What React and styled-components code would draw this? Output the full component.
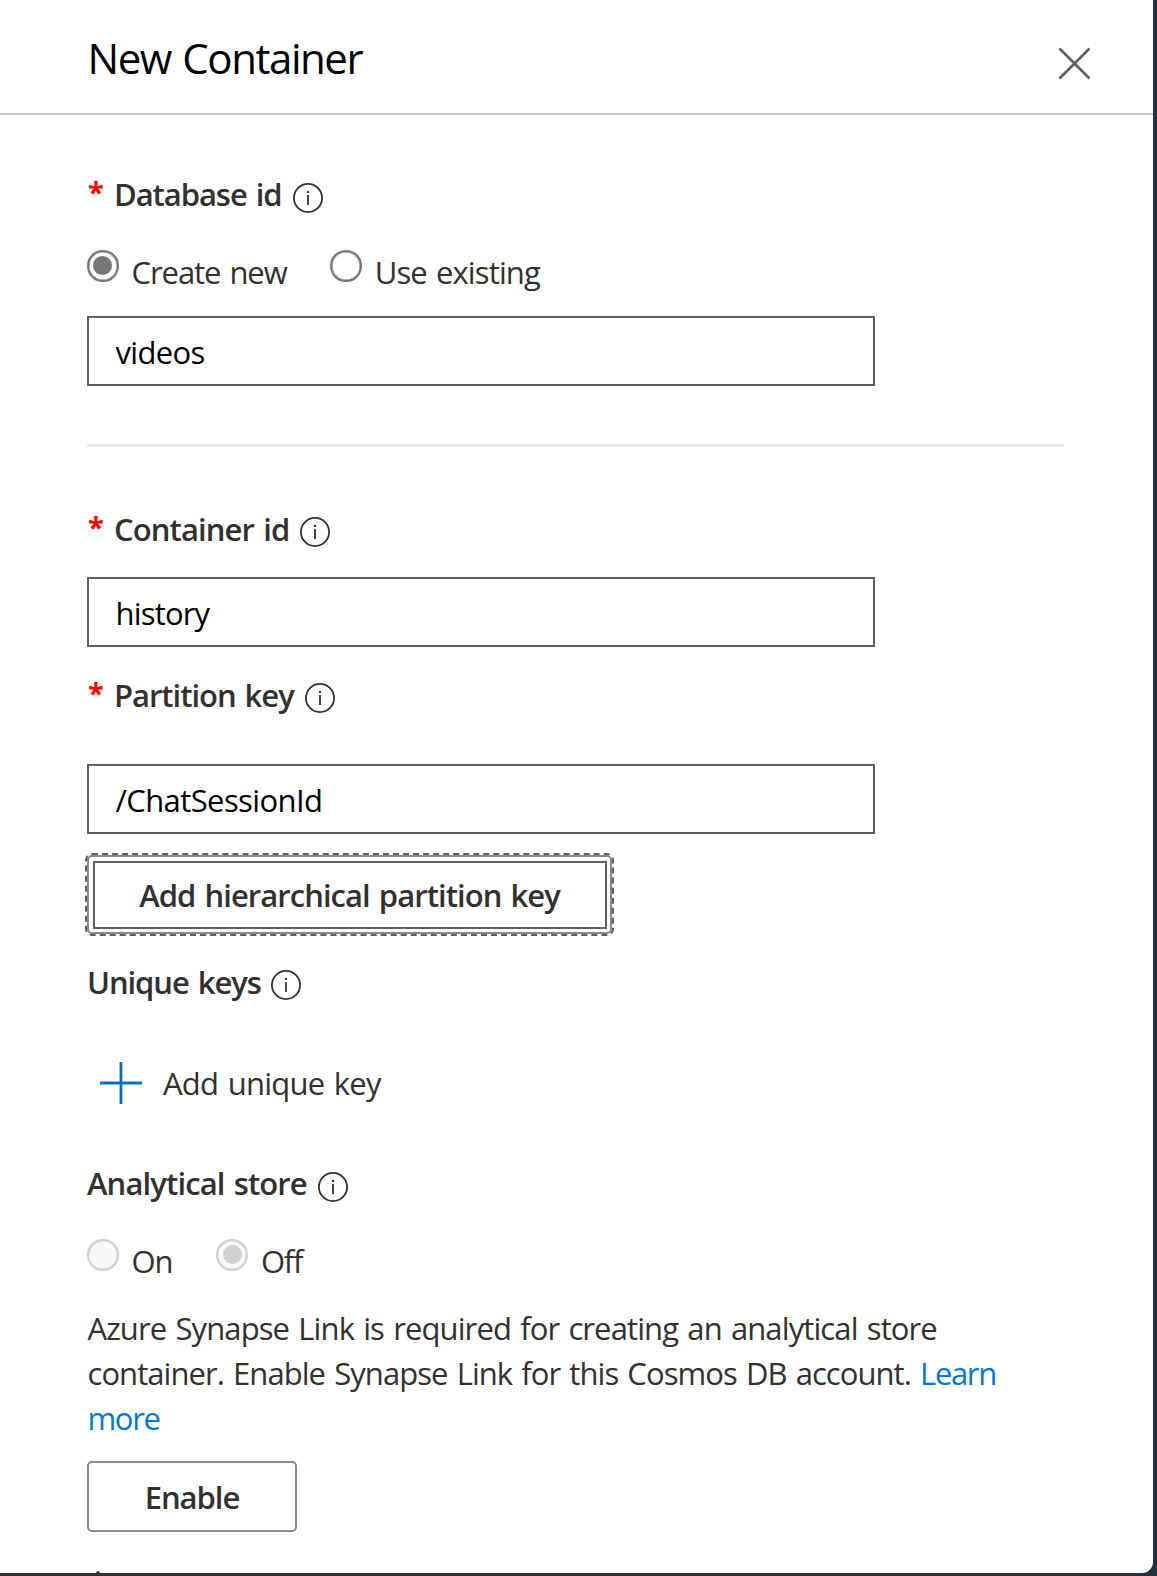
import React from 'react';
import styled, { createGlobalStyle, css } from 'styled-components';

const GlobalStyle = createGlobalStyle`
  *, *::before, *::after { box-sizing: border-box; }
  body {
    margin: 0;
    background: #27323f;
    font-family: "Segoe UI", "Open Sans", "Noto Sans", sans-serif;
    font-size: 31px;
    color: #323130;
  }
`;

const textFit = css`
  letter-spacing: ${(p) => p.$track ?? -1}px;
  word-spacing: ${(p) => p.$words ?? 2}px;
  white-space: nowrap;
`;

const Page = styled.div`
  height: 1576px;
  overflow: hidden;
  background: #27323f;
`;

const Panel = styled.section`
  width: 1153px;
  height: 1573px;
  overflow: hidden;
  background: #fff;
  border-bottom-right-radius: 11px;
`;

const Header = styled.header`
  display: flex;
  align-items: center;
  justify-content: space-between;
  height: 115px;
  padding: 0 62px 0 87.5px;
  border-bottom: 2px solid #c8c8c8;
`;

const Title = styled.h1`
  ${textFit}
  margin: 0;
  padding-top: 2px;
  font-size: 42px;
  font-weight: 400;
  line-height: 111px;
  color: #000;
`;

const CloseButton = styled.button`
  display: flex;
  margin: 13px 0 0;
  padding: 0;
  border: 0;
  background: none;
`;

const Form = styled.main`
  display: flex;
  flex-direction: column;
  align-items: flex-start;
  padding-left: 87px;
`;

const LabelRow = styled.div`
  display: flex;
  align-items: center;
  height: 40px;
  margin-top: ${(p) => p.$top}px;
  line-height: 40px;
`;

const Star = styled.span`
  width: 27px;
  padding: 0 0 4px 1px;
  font-size: 29px;
  font-weight: 700;
  color: #f00;
`;

const LabelText = styled.span`
  ${textFit}
  font-weight: 600;
`;

const InfoSvg = styled.svg`
  margin: ${(p) => p.$drop}px 0 0 ${(p) => p.$gap}px;
`;

const RadioRow = styled.div`
  display: flex;
  gap: ${(p) => p.$gap}px;
  height: 40px;
  margin-top: 38px;
`;

const RadioLabel = styled.label`
  ${textFit}
  display: flex;
  align-items: center;
  gap: 13px;
  line-height: 40px;
`;

const RadioMark = styled.span`
  --ring: ${(p) => (p.$disabled ? '#d0d0d0' : '#767676')};
  display: grid;
  place-items: center;
  width: 31.5px;
  height: 31.5px;
  margin-bottom: 12.5px;
  border: 2px solid var(--ring);
  border-radius: 50%;
  box-shadow: inset 0 0 0 0.5px var(--ring);
  background: ${(p) => (p.$disabled ? '#f8f8f8' : '#fff')};

  &::after {
    content: "";
    width: 19px;
    height: 19px;
    border-radius: 50%;
    background: ${(p) => (p.$checked ? 'var(--ring)' : 'transparent')};
  }
`;

const TextInput = styled.input`
  ${textFit}
  width: 788px;
  height: 70px;
  margin: ${(p) => p.$top}px 0 0;
  padding: 2px 27px 0 26.5px;
  border: 2px solid #605e5c;
  border-radius: 0;
  outline: 0;
  background: #fff;
  color: #000;
  font: inherit;
  letter-spacing: ${(p) => p.$track}px;
`;

const Divider = styled.hr`
  width: 977px;
  height: 3px;
  margin: 58px 0 0;
  border: 0;
  background: #eaeaea;
`;

const Button = styled.button`
  ${textFit}
  position: relative;
  width: ${(p) => p.$width}px;
  height: ${(p) => p.$height}px;
  margin: ${(p) => p.$top}px 0 0;
  padding: 0;
  border: 2px solid #8a8886;
  border-radius: 5px;
  background: #fff;
  color: #323130;
  font: inherit;
  font-weight: 600;
  letter-spacing: ${(p) => p.$track}px;

  ${(p) =>
    p.$focused &&
    css`
      outline: 2px dashed #605e5c;

      &::after {
        content: "";
        position: absolute;
        inset: 4px 3px 3px 4px;
        border: 2px solid #605e5c;
      }
    `}
`;

const AddAction = styled.button`
  ${textFit}
  display: flex;
  align-items: center;
  gap: 21px;
  height: 40px;
  margin: 61px 0 0 13px;
  padding: 0;
  border: 0;
  background: none;
  color: #323130;
  font: inherit;
  line-height: 40px;
  letter-spacing: ${(p) => p.$track}px;
`;

const Note = styled.p`
  ${textFit}
  margin: 25px 0 0;
  padding-left: 0.5px;
  line-height: 45px;
`;

const NoteLine = styled.span`
  letter-spacing: ${(p) => p.$track}px;
`;

const NoteLink = styled.a`
  letter-spacing: -1.35px;
  color: #0078d4;
`;

const SectionChevron = styled.svg`
  margin: 39px 0 0 3px;
`;

function Info({ drop, gap }) {
  return (
    <InfoSvg $drop={drop} $gap={gap} width="30" height="30" viewBox="0 0 30 30" fill="none">
      <circle cx="15" cy="15" r="14.1" stroke="#323130" strokeWidth="1.8" />
      <path d="M15 12v10" stroke="#323130" strokeWidth="1.8" />
      <circle cx="15" cy="8.9" r="1.2" fill="#323130" />
    </InfoSvg>
  );
}

function FieldLabel({ top, track, drop = 6, gap = 11, required, children }) {
  return (
    <LabelRow $top={top}>
      {required && <Star>*</Star>}
      <LabelText $track={track}>{children}</LabelText>
      <Info drop={drop} gap={gap} />
    </LabelRow>
  );
}

function Radio({ checked, disabled, track, children }) {
  return (
    <RadioLabel $track={track}>
      <RadioMark $checked={checked} $disabled={disabled} />
      {children}
    </RadioLabel>
  );
}

export default function App() {
  return (
    <Page>
      <GlobalStyle />
      <Panel>
        <Header>
          <Title $track={-1.45}>New Container</Title>
          <CloseButton aria-label="Close">
            <svg width="33" height="33" viewBox="0 0 33 33" fill="none">
              <path d="M1.5 1.5l30 30M31.5 1.5l-30 30" stroke="#605e5c" strokeWidth="2.6" />
            </svg>
          </CloseButton>
        </Header>
        <Form>
          <FieldLabel top={59} track={-1.06} drop={7} gap={11.5} required>Database id</FieldLabel>
          <RadioRow $gap={43.5}>
            <Radio checked track={-1.06}>Create new</Radio>
            <Radio track={-0.88}>Use existing</Radio>
          </RadioRow>
          <TextInput $top={24} $track={-0.68} defaultValue="videos" />
          <Divider />
          <FieldLabel top={62} track={-0.9} required>Container id</FieldLabel>
          <TextInput $top={28} $track={-0.82} defaultValue="history" />
          <FieldLabel top={28} track={-1.03} required>Partition key</FieldLabel>
          <TextInput $top={49} $track={-0.6} defaultValue="/ChatSessionId" />
          <Button $top={21} $width={525} $height={79} $track={-0.95} $focused>
            Add hierarchical partition key
          </Button>
          <FieldLabel top={28} track={-1.08} gap={10.5}>Unique keys</FieldLabel>
          <AddAction $track={-0.74}>
            <svg width="42" height="42" viewBox="0 0 42 42" fill="none">
              <path d="M21 0v42M0 21h42" stroke="#106ebe" strokeWidth="2.8" />
            </svg>
            Add unique key
          </AddAction>
          <FieldLabel top={60} track={-0.88} drop={7}>Analytical store</FieldLabel>
          <RadioRow $gap={44}>
            <Radio disabled track={-1.1}>On</Radio>
            <Radio checked disabled track={-1.2}>Off</Radio>
          </RadioRow>
          <Note $words={2}>
            <NoteLine $track={-0.89}>
              Azure Synapse Link is required for creating an analytical store
            </NoteLine>
            <br />
            <NoteLine $track={-0.94}>
              container. Enable Synapse Link for this Cosmos DB account.{' '}
            </NoteLine>
            <NoteLink>Learn
            <br />
            more</NoteLink>
          </Note>
          <Button $top={20} $width={210} $height={71} $track={-1.02}>Enable</Button>
          <SectionChevron width="16" height="10" viewBox="0 0 16 10" fill="none">
            <path d="M1 8l7-7 7 7" stroke="#323130" strokeWidth="2" />
          </SectionChevron>
        </Form>
      </Panel>
    </Page>
  );
}
